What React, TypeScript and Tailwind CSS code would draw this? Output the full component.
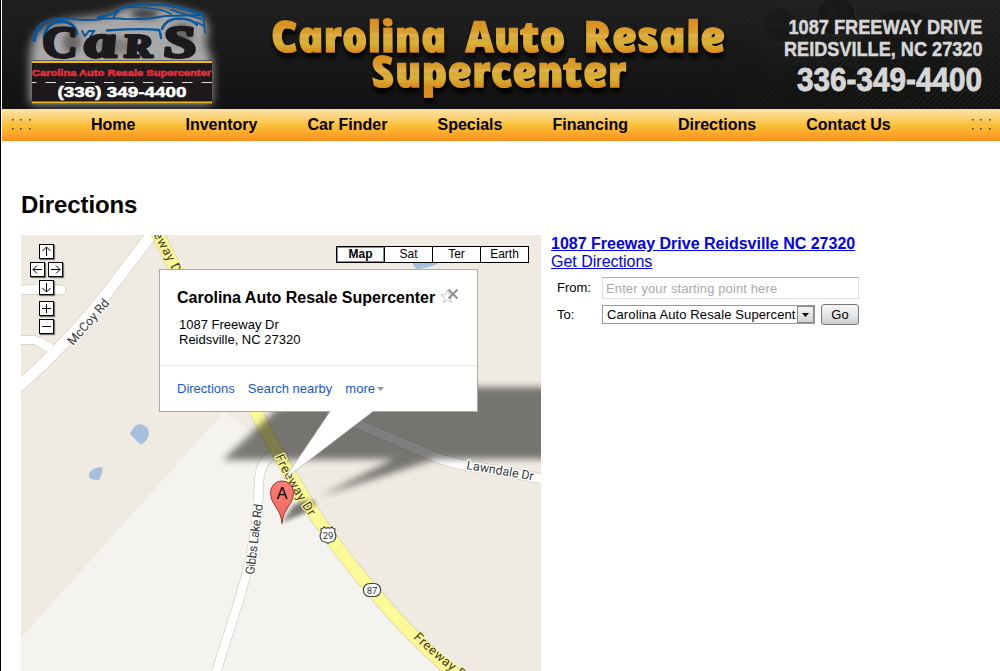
import type { ReactNode } from "react";

const navItems = [
    "Home",
    "Inventory",
    "Car Finder",
    "Specials",
    "Financing",
    "Directions",
    "Contact Us",
];

const mapTypes = ["Map", "Sat", "Ter", "Earth"];

const titleWords = [
    { word: "Carolina", x: 274, y: 52, length: 175 },
    { word: "Auto", x: 468, y: 52, length: 100 },
    { word: "Resale", x: 586, y: 52, length: 142 },
    { word: "Supercenter", x: 374, y: 87, length: 255 },
];

const FREEWAY = "M154 226 L175 268 L256 412 Q292 482 328 534 Q350 565 372 590 Q410 636 451 671 L465 683";
const MCCOY = "M158 226 L104 297 Q80 327 57 350 Q40 368 10 394";
const GIBBS = "M280 453 Q260 456 259 482 Q258 540 239 600 L213 682";
const LAWNDALE = "M330 412 L433 456 Q455 465 483 468 L550 480";

export default function App() {
    return (
        <div
            className="h-[671px] w-[1000px] overflow-hidden border-l border-black bg-white pl-px text-black"
            style={{ fontFamily: '"Liberation Sans", Arial, sans-serif' }}
        >
            <Banner />
            <NavBar />

            <main className="pl-[19px]">
                <h1 className="pt-[50px] text-2xl leading-7 font-bold tracking-[-0.1px]">Directions</h1>
                <div className="mt-4 flex gap-2.5">
                    <MapPanel />
                    <DirectionsForm />
                </div>
            </main>
        </div>
    );
}

function Banner() {
    return (
        <header className="h-[109px] bg-[#181818]">
            <svg className="block" width="998" height="109" viewBox="2 0 998 109">
                <defs>
                    <linearGradient id="dark" x1="0" y1="0" x2="0" y2="1">
                        <stop offset="0" stopColor="#202020" />
                        <stop offset="1" stopColor="#121212" />
                    </linearGradient>
                    <linearGradient id="gold" x1="0" y1="-33" x2="0" y2="0" gradientUnits="userSpaceOnUse">
                        <stop offset="0" stopColor="#dd8c1c" />
                        <stop offset="0.42" stopColor="#d9a12b" />
                        <stop offset="0.5" stopColor="#e2b052" />
                        <stop offset="0.58" stopColor="#d8a92f" />
                        <stop offset="0.72" stopColor="#d8b337" />
                        <stop offset="1" stopColor="#dc8d1e" />
                    </linearGradient>
                    <pattern id="hatch" width="6" height="6" patternUnits="userSpaceOnUse">
                        <path d="M-1 7 L7 -1" stroke="#2b2a27" strokeWidth="0.8" />
                    </pattern>
                    <linearGradient id="reveal" x1="0" y1="0" x2="1" y2="0">
                        <stop offset="0" stopColor="#000" />
                        <stop offset="0.5" stopColor="#fff" />
                    </linearGradient>
                    <mask id="dash">
                        <rect x="690" width="310" height="109" fill="url(#reveal)" />
                    </mask>
                    <filter id="glow" x="-20%" y="-20%" width="140%" height="140%">
                        <feGaussianBlur stdDeviation="5" />
                    </filter>
                    <filter id="smudge" x="-50%" y="-50%" width="200%" height="200%">
                        <feGaussianBlur stdDeviation="3" />
                    </filter>
                    <filter id="drop" x="-5%" y="-10%" width="110%" height="130%">
                        <feDropShadow dx="1" dy="5" stdDeviation="2.5" floodColor="#000" />
                    </filter>
                </defs>
                <rect x="2" width="998" height="109" fill="url(#dark)" />

                {/* dashboard gauges */}
                <g mask="url(#dash)">
                    <rect x="690" width="310" height="109" fill="url(#hatch)" />
                    <g fill="#141414" fillOpacity="0.6" stroke="#2a2a2a">
                        <circle cx="780" cy="25" r="18" />
                        <circle cx="836" cy="16" r="20" />
                        <circle cx="740" cy="68" r="28" strokeDasharray="1 2" />
                        <circle cx="903" cy="56" r="45" strokeDasharray="1 3" />
                        <path d="M781 66 H855 V109 H781 Z" stroke="none" />
                    </g>
                    <path d="M762 26 H787 M829 8 L838 20 M890 60 L925 46 M700 100 L733 70" stroke="#202038" strokeWidth="1.5" />
                </g>
                <path d="M668 68 Q664 90 678 107" fill="none" stroke="#252525" strokeDasharray="1 2" />

                {/* logo */}
                <path
                    d="M32 42 Q38 22 74 19 L112 14 Q122 5 160 5 L203 16 Q212 32 205 42 L212 60 V104 H30 V58 Z"
                    fill="#a8a8a8"
                    filter="url(#glow)"
                />
                <g fill="#3c3c3c" filter="url(#smudge)">
                    <ellipse cx="72" cy="42" rx="9" ry="11" opacity="0.6" />
                    <ellipse cx="145" cy="14" rx="14" ry="5" />
                    <ellipse cx="182" cy="34" rx="11" ry="11" opacity="0.6" />
                    <ellipse cx="112" cy="46" rx="20" ry="9" opacity="0.4" />
                </g>
                <g fill="none" stroke="#0a579c" strokeLinecap="round">
                    <path d="M33 41 Q34 25 49 20 Q62 17 78 19.500 Q94 21 104 18.500 L122 18.500" strokeWidth="2" />
                    <path d="M98 17.500 L113 14 Q122 5 143 4.500 Q170 4 186 9 L203 14.500" strokeWidth="2.400" />
                    <path d="M113 18 L121 8 Q140 6 158 9.500 Q166 11 171 14" strokeWidth="1.600" />
                    <path d="M122 19 Q145 20 165 16 L203 15 L205 33" strokeWidth="1.800" />
                    <path d="M171 10 L201 19 M196 22 L204 26" strokeWidth="1.800" />
                    <path d="M107 30.500 Q140 28 159 30 Q161 34 161 38 M162 29 Q166 18.500 180 18.500 Q192 19 197 25" strokeWidth="2.400" />
                    <path d="M44 38 Q46 22 61 21.500 Q75 22 77 34" strokeWidth="3" />
                    <path d="M35 41 Q35 31 42 28 M82 31 L85 36 L89 31 H94 L90 37" strokeWidth="2" />
                </g>
                <g
                    fill="#1c1a1c"
                    stroke="#1c1a1c"
                    strokeWidth="3"
                    strokeLinejoin="round"
                    fontFamily="Liberation Serif, serif"
                    fontWeight="bold"
                    fontStyle="italic"
                >
                    <text transform="translate(45 56.500) skewX(9)" fontSize="44" textLength="33" lengthAdjust="spacingAndGlyphs">C</text>
                    <text transform="translate(86 56.500) skewX(9)" fontSize="46" textLength="33" lengthAdjust="spacingAndGlyphs">a</text>
                    <text transform="translate(125 56.500) skewX(9)" fontSize="33" textLength="29" lengthAdjust="spacingAndGlyphs">R</text>
                    <text transform="translate(165 56.500) skewX(9)" fontSize="45" textLength="34" lengthAdjust="spacingAndGlyphs">S</text>
                </g>
                <rect x="32" y="60.500" width="180" height="43.500" fill="#1d191c" />
                <path d="M32 62 H212 M32 102.500 H212" stroke="#f2b90e" strokeWidth="2" />
                <path d="M32 82.500 H212" stroke="#ddd" strokeDasharray="10.500 9" strokeDashoffset="6" />
                <text x="32" y="76" fontSize="9.500" fontWeight="bold" fontFamily="Liberation Sans, sans-serif" fill="#e02f3b" stroke="#e02f3b" strokeWidth="0.600" textLength="179" lengthAdjust="spacingAndGlyphs">
                    Carolina Auto Resale Supercenter
                </text>
                <text x="57.500" y="96.500" fontSize="15" fontWeight="bold" fontFamily="Liberation Sans, sans-serif" fill="#fff" stroke="#fff" strokeWidth="0.500" textLength="129" lengthAdjust="spacingAndGlyphs">
                    (336) 349-4400
                </text>

                {/* site title */}
                <g
                    filter="url(#drop)"
                    fill="url(#gold)"
                    stroke="url(#gold)"
                    strokeWidth="1"
                    fontFamily="Open Sans, sans-serif"
                    fontWeight="800"
                    fontStyle="italic"
                    fontSize="43"
                >
                    {titleWords.map(({ word, x, y, length }) => (
                        <text key={word} transform={`translate(${x} ${y}) skewX(12)`} textLength={length} lengthAdjust="spacingAndGlyphs">
                            {word}
                        </text>
                    ))}
                </g>

                <g fill="#d6d6d6" fontFamily="Liberation Sans, Arial, sans-serif" fontWeight="bold" stroke="#d6d6d6" strokeWidth="0.500">
                    <text x="788.500" y="34" fontSize="21" textLength="194" lengthAdjust="spacingAndGlyphs">1087 FREEWAY DRIVE</text>
                    <text x="784" y="55.500" fontSize="21" textLength="198.500" lengthAdjust="spacingAndGlyphs">REIDSVILLE, NC 27320</text>
                    <text x="797" y="91" fontSize="34" strokeWidth="0.900" textLength="185" lengthAdjust="spacingAndGlyphs">336-349-4400</text>
                </g>
            </svg>
        </header>
    );
}

function NavBar() {
    return (
        <nav className="flex h-8 items-center bg-linear-to-b from-[#fae3a6] via-[#fcc137] to-[#f9901f] pr-[9px] pl-[9px]">
            <Dots />
            <ul className="ml-[60px] flex gap-[50px] leading-5 font-bold">
                {navItems.map((item) => (
                    <li key={item} className="whitespace-nowrap">{item}</li>
                ))}
            </ul>
            <div className="ml-auto">
                <Dots />
            </div>
        </nav>
    );
}

function Dots() {
    return (
        <svg className="block" width="20" height="14" fill="#4a2c10">
            {[1, 9, 18].map((x) => (
                <g key={x}>
                    <rect x={x} y="1" width="1.500" height="1.500" />
                    <rect x={x} y="10" width="1.500" height="1.500" />
                </g>
            ))}
        </svg>
    );
}

function MapPanel() {
    return (
        <section className="relative h-[436px] w-[520px] shrink-0 overflow-hidden bg-[#efebe3]">
            <MapCanvas />

            {/* pan + zoom */}
            <div className="absolute top-[9px] left-[9px] flex w-[33px] flex-col items-center gap-[3px]">
                <ControlButton d="M7.500 12 V3 M3.500 7 L7.500 3 L11.500 7" />
                <div className="flex gap-[3px]">
                    <ControlButton d="M12 7.500 H3 M7 3.500 L3 7.500 L7 11.500" />
                    <ControlButton d="M3 7.500 H12 M8 3.500 L12 7.500 L8 11.500" />
                </div>
                <ControlButton d="M7.500 3 V12 M3.500 8 L7.500 12 L11.500 8" />
                <div className="mt-[3px]">
                    <ControlButton d="M3 7.500 H12 M7.500 3 V12" />
                </div>
                <ControlButton d="M3 7.500 H12" />
            </div>

            {/* map type switch */}
            <div className="absolute top-[11px] left-[315px] flex h-[17px] w-[193px] divide-x divide-black border border-black bg-white text-center text-xs leading-[15px]">
                {mapTypes.map((type) => (
                    <span
                        key={type}
                        className={type === "Map" ? "flex-1 font-bold inset-ring inset-ring-[#6a90c8]" : "flex-1"}
                    >
                        {type}
                    </span>
                ))}
            </div>

            <InfoWindow />

            {/* pointer of the info window */}
            <svg className="absolute top-[175px] left-[262px]" width="94" height="72" viewBox="283 410 94 72">
                <path d="M330 411.500 L284.500 479 L373 411.500" fill="#fff" stroke="#aaa" strokeWidth="0.600" />
                <path d="M330.500 410 H372 V412 H330 Z" fill="#fff" />
            </svg>
        </section>
    );
}

function ControlButton({ d }: { d: string }) {
    return (
        <button className="block size-[15px] bg-white shadow-[1px_1px_1px_#777]">
            <svg className="block" width="15" height="15" fill="none" stroke="#000" strokeWidth="1">
                <rect x="0.500" y="0.500" width="14" height="14" />
                <path d={d} />
            </svg>
        </button>
    );
}

function InfoWindow() {
    return (
        <div className="absolute top-[34px] left-[138px] flex h-[143px] w-[319px] flex-col border border-[#aaa] bg-white">
            <div className="flex h-[96px] flex-col border-b border-[#ebebe6] pt-[18px] pl-[17px]">
                <div className="flex items-start">
                    <h2 className="w-[263px] text-base leading-5 font-bold whitespace-nowrap">
                        Carolina Auto Resale Supercenter
                    </h2>
                    <svg className="-mt-0.5 block" width="22" height="20" fill="none">
                        <path d="M7.500 4 L9.300 8.500 L14 8.800 L10.400 11.800 L11.600 16.300 L7.500 13.800 L3.400 16.300 L4.600 11.800 L1 8.800 L5.700 8.500 Z" stroke="#c4c4c4" fill="#fff" />
                        <path d="M8.500 3.500 L17.500 12.500 M17.500 3.500 L8.500 12.500" stroke="#929292" strokeWidth="2" />
                    </svg>
                </div>
                <p className="mt-[9px] pl-0.5 text-[13px] leading-[15px]">
                    1087 Freeway Dr
                    <br />
                    Reidsville, NC 27320
                </p>
            </div>
            <div className="flex flex-1 items-center gap-[13px] pl-[17px] text-[13px] text-[#1a56d0]">
                <span>Directions</span>
                <span>Search nearby</span>
                <span className="flex items-center gap-[2px]">
                    more
                    <svg className="block" width="7" height="4">
                        <path d="M0 0 H7 L3.500 4 Z" fill="#999" />
                    </svg>
                </span>
            </div>
        </div>
    );
}

function Road({ d, width, fill = "#fff", edge = "#d5cfc4" }: { d: string; width: number; fill?: string; edge?: string }) {
    return (
        <g fill="none" strokeLinecap="round" strokeLinejoin="round">
            <path d={d} stroke={edge} strokeWidth={width + 1.4} />
            <path d={d} stroke={fill} strokeWidth={width} />
        </g>
    );
}

type LabelProps = {
    id: string;
    path: string;
    length?: number;
    fill?: string;
    halo?: string;
    children: ReactNode;
};

function Label({ id, path, length, fill = "#383838", halo = "#fff", children }: LabelProps) {
    return (
        <>
            <path id={id} d={path} fill="none" />
            <text fill={fill} stroke={halo} strokeWidth="2.500" strokeLinejoin="round" paintOrder="stroke" textLength={length}>
                <textPath href={`#${id}`}>{children}</textPath>
            </text>
        </>
    );
}

function MapCanvas() {
    return (
        <svg className="block" width="520" height="436" viewBox="21 235 520 436">
            <defs>
                <filter id="soft" x="-20%" y="-20%" width="140%" height="140%">
                    <feGaussianBlur stdDeviation="3.500" />
                </filter>
                <filter id="softer" x="-20%" y="-40%" width="140%" height="180%">
                    <feGaussianBlur stdDeviation="2" />
                </filter>
                <linearGradient id="pin" x1="0" y1="0" x2="0" y2="1">
                    <stop offset="0" stopColor="#fb8078" />
                    <stop offset="1" stopColor="#f0645c" />
                </linearGradient>
            </defs>
            <path d="M21 638 L224 412 L262 440 L328 534 Q372 592 451 671 H21 Z" fill="#f4f3ef" />

            {/* ponds */}
            <g fill="#a5bfdd">
                <path d="M130 434 Q134 424 140 424 Q149 426 149 434 Q148 440 141 445 Z" />
                <path d="M89 474 Q92 467 102 467 Q104 471 99 480 Q91 480 89 477 Z" />
                <path d="M413 263 H439 Q430 268 418 269 Q413 268 413 263 Z" />
            </g>

            <Road d="M10 291 Q40 288 61 290" width={9} />
            <Road d="M10 340 H35 L57 352" width={8} />
            <Road d={MCCOY} width={11} />
            <Road d="M50 348 L40 342.500" width={7} edge="#fff" />
            <Road d={LAWNDALE} width={9} />
            <Road d={GIBBS} width={8.5} />
            <Road d={FREEWAY} width={12} fill="#fcf999" edge="#d6cfa4" />

            {/* shadows of the window and the pin */}
            <path d="M223 460 L300 387 H560 V459 H436 L320 496 L394 459 Z" fill="#000" opacity="0.500" filter="url(#soft)" />
            <path d="M282 523 L293 506 Q304 498 316 502 Q310 513 292 518 Z" fill="#000" opacity="0.500" filter="url(#softer)" />

            <g fontFamily="Roboto, sans-serif" fontSize="12.500">
                <Label id="mccoy" path="M73 346 L119 293">McCoy Rd</Label>
                <Label id="gibbs" path="M254 575 L263 503 L271 440" length={71}>Gibbs Lake Rd</Label>
                <Label id="lawndale" path="M466 469 L560 485" length={68}>Lawndale Dr</Label>
            </g>
            <g fontFamily="Roboto, sans-serif" fontSize="13">
                <Label id="fw1" path="M144 217 L194 311" length={69} fill="#4a3a1c" halo="#fcf999">Freeway Dr</Label>
                <Label id="fw2" path="M275 457 Q291 492 325 540" length={69} fill="#4a3a1c" halo="#fcf999">Freeway Dr</Label>
                <Label id="fw3" path="M413 638 Q440 664 500 708" length={69} fill="#4a3a1c" halo="#fcf999">Freeway Dr</Label>
            </g>

            {/* route shields */}
            <g fill="#fff" stroke="#444" strokeWidth="1.200" fontFamily="Roboto, sans-serif" fontSize="9.500" textAnchor="middle">
                <path d="M321 529 Q323 529 324 527 Q326 529 328 527.500 Q330 529 332 527 Q333 529 335 529 Q334 532 336 536 Q335 542 331 542 Q329 542 328 543.500 Q327 542 325 542 Q321 542 320 536 Q322 532 321 529 Z" />
                <rect x="363.500" y="583.500" width="17" height="13" rx="6" />
                <text x="328" y="539" fill="#333" stroke="none">29</text>
                <text x="372" y="593.500" fill="#333" stroke="none">87</text>
            </g>

            {/* marker */}
            <path d="M282 523.500 C281 508 270.500 505 270.500 492.500 A11.500 11.500 0 0 1 293.500 492.500 C293.500 505 283 508 282 523.500 Z" fill="url(#pin)" stroke="#9c3530" />
            <text x="282" y="498.500" fontSize="16" textAnchor="middle" fontFamily="Liberation Sans, Arial, sans-serif">A</text>
        </svg>
    );
}

function DirectionsForm() {
    return (
        <section className="w-[310px]">
            <div className="text-base leading-[18px] text-[#0000ee] underline">
                <p className="font-bold whitespace-nowrap">1087 Freeway Drive Reidsville NC 27320</p>
                <p>Get Directions</p>
            </div>
            <form className="mt-1.5 flex w-[308px] flex-col gap-[5px] pl-1.5 text-[13px]">
                <div className="flex items-center">
                    <label className="w-[45px]">From:</label>
                    <input
                        className="h-[22px] w-[257px] border border-[#dde0e6] border-t-[#abadb3] px-[3px] tracking-[0.12px] outline-none placeholder:text-[#aaa]"
                        placeholder="Enter your starting point here"
                    />
                </div>
                <div className="flex items-center">
                    <label className="w-[45px]">To:</label>
                    <div className="flex h-[19px] w-[213px] items-center justify-between border border-[#999] pl-1">
                        <span className="w-[190px] overflow-hidden tracking-[0.12px] whitespace-nowrap">
                            Carolina Auto Resale Supercent
                        </span>
                        <span className="flex h-[17px] w-[17px] shrink-0 items-center justify-center border border-[#888] bg-linear-to-b from-[#f4f4f4] to-[#d4d4d4]">
                            <svg className="block" width="7" height="4">
                                <path d="M0 0 H7 L3.500 4 Z" />
                            </svg>
                        </span>
                    </div>
                    <button
                        type="button"
                        className="ml-1.5 h-[21px] w-[38px] rounded-[3px] border border-[#777] bg-linear-to-b from-[#f4f4f4] via-[#e8e8e8] to-[#cfcfcf]"
                    >
                        Go
                    </button>
                </div>
            </form>
        </section>
    );
}
